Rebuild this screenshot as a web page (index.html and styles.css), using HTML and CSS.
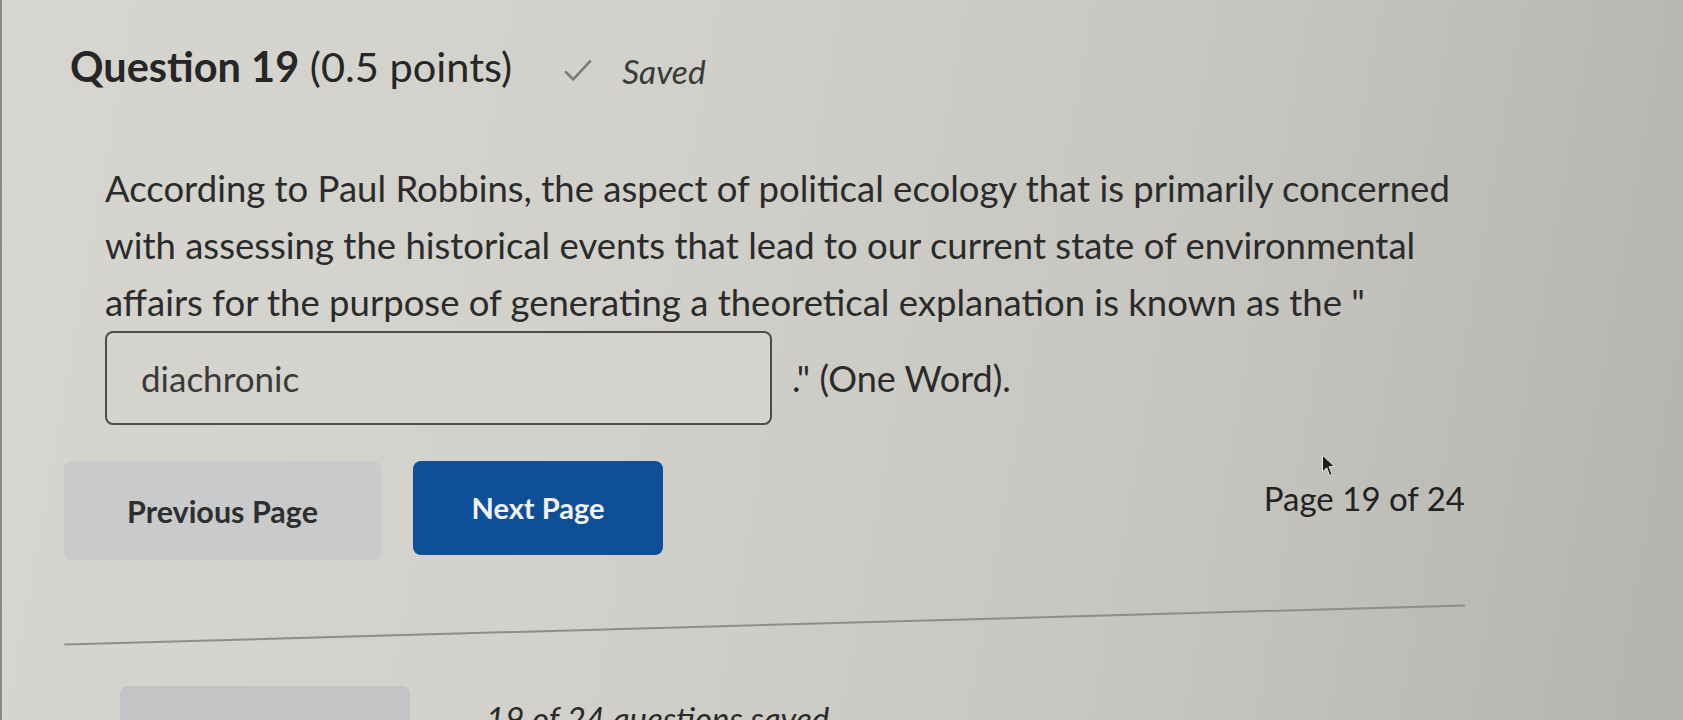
FILE: index.html
```html
<!DOCTYPE html>
<html>

    <head>
        <title>Question 19</title>
        <link rel="stylesheet" href="styles.css">
    </head>

    <body>
        <div class="page">
            <div class="q-head">
                <h2 class="q-title"><strong>Question 19</strong> (0.5 points)</h2>
                <span class="saved">
                    <svg class="check" viewBox="0 0 24 20" width="32" height="24">
                        <path d="M2 11 L8 17 L22 2" fill="none" stroke="#7a7a78" stroke-width="2.2" stroke-linecap="round" stroke-linejoin="round"/>
                    </svg>
                    <em>Saved</em>
                </span>
            </div>

            <div class="q-body">
                <p class="q-text">According to Paul Robbins, the aspect of political ecology that is primarily concerned
                    with assessing the historical events that lead to our current state of environmental
                    affairs for the purpose of generating a theoretical explanation is known as the "</p>
                <div class="answer-row">
                    <input class="answer" type="text" value="diachronic">
                    <span class="after">." (One Word).</span>
                </div>
            </div>

            <div class="nav">
                <button class="btn btn-prev">Previous Page</button>
                <button class="btn btn-next">Next Page</button>
                <div class="page-count">
                    Page 19 of 24
                    <svg class="cursor" viewBox="0 0 12 20" width="15" height="24">
                        <path d="M1 1 L1 15 L4.5 11.5 L7 18 L9 17 L6.5 10.5 L11 10.5 Z" fill="#1c1c1c" stroke="#e8e8e8" stroke-width="0.8"/>
                    </svg>
                </div>
            </div>

            <hr class="divider">

            <div class="footer">
                <button class="btn btn-submit">Submit Quiz</button>
                <em class="saved-count">19 of 24 questions saved</em>
            </div>
        </div>
    </body>

</html>
```

FILE: styles.css
```css
body {
    margin: 0;
    height: 720px;
    overflow: hidden;
    font-family: Lato, "Open Sans", sans-serif;
    color: #2a2a2a;
    background: linear-gradient(100deg, #d6d5cf 0%, #d2d1cb 35%, #c6c5bf 70%, #b4b3ad 100%);
    border-left: 2px solid #8a8984;
}

.page {
    width: 1401px;
    padding: 42px 0 0 62px;
}

.q-head {
    display: flex;
    align-items: center;
    gap: 50px;
    margin-left: 6px;
    height: 48px;
}

.q-title {
    margin: 0;
    font-size: 41.5px;
    font-weight: 400;
    line-height: 48px;
    color: #262626;
}

.q-title strong {
    font-weight: 700;
}

.saved {
    display: flex;
    align-items: center;
    gap: 28px;
    margin-top: 10px;
    font-size: 33.5px;
    color: #3a3a3a;
}

.q-body {
    margin-left: 41px;
    margin-top: 70px;
}

.q-text {
    margin: 0;
    width: 1380px;
    font-size: 36.5px;
    line-height: 57px;
    color: #2b2b2b;
}

.answer-row {
    display: flex;
    align-items: center;
    gap: 20px;
}

.answer {
    box-sizing: border-box;
    width: 667px;
    height: 94px;
    padding: 0 34px;
    border: 2px solid #4a4c52;
    border-radius: 8px;
    background: #d4d3ce;
    font-family: Lato, "Open Sans", sans-serif;
    font-size: 35px;
    color: #3a3a3a;
}

.after {
    font-size: 36px;
    color: #2b2b2b;
}

.nav {
    display: flex;
    align-items: center;
    gap: 32px;
    margin-top: 36px;
}

.btn {
    border: none;
    border-radius: 8px;
    font-family: Lato, "Open Sans", sans-serif;
    font-weight: 700;
    font-size: 29px;
    cursor: pointer;
}

.btn-prev {
    width: 317px;
    height: 99px;
    background: #c9cacb;
    color: #2e2e2e;
    font-size: 30.5px;
}

.btn-next {
    width: 250px;
    height: 94px;
    margin-top: -6px;
    background: #0e4f9a;
    color: #f4f4f4;
}

.page-count {
    position: relative;
    margin-left: auto;
    margin-top: -26px;
    font-size: 33px;
    color: #222;
}

.cursor {
    position: absolute;
    left: 57px;
    top: -24px;
}

.divider {
    width: 1401px;
    margin: 64px 0 0;
    border: none;
    border-top: 2px solid #8d8d89;
    transform: rotate(-1.6deg);
}

.footer {
    display: flex;
    align-items: flex-start;
    gap: 76px;
    margin-top: 60px;
    margin-left: 56px;
}

.btn-submit {
    width: 290px;
    height: 80px;
    background: #c3c4c6;
    color: transparent;
}

.saved-count {
    margin-top: 12px;
    font-size: 33px;
    color: #2a2a2a;
}
```
